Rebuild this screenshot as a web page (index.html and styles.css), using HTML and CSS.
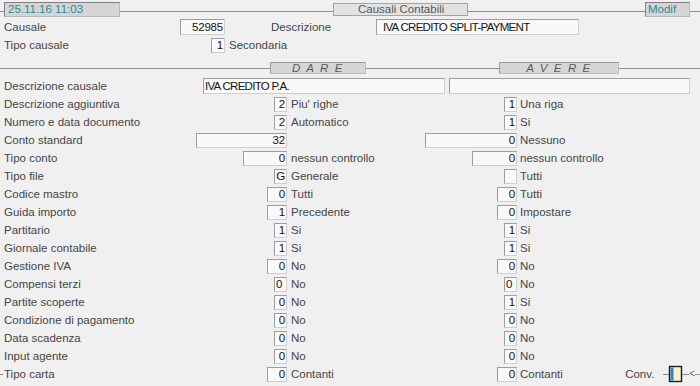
FILE: index.html
```html
<!DOCTYPE html>
<html lang="it">
<head>
<meta charset="utf-8">
<title>Causali Contabili</title>
<link rel="stylesheet" href="styles.css">
</head>
<body>
<div class="screen">
  <div class="topbar">
    <span class="rule w4"></span>
    <div class="stamp date">25.11.16 11:03</div>
    <span class="rule w213"></span>
    <div class="title">Causali Contabili</div>
    <span class="rule grow"></span>
    <div class="stamp modif">Modif</div>
    <span class="rule w10"></span>
  </div>

  <div class="head-row">
    <span class="lbl w176">Causale</span>
    <span class="fld h16 w45">52985</span>
    <span class="lbl desc-lbl">Descrizione</span>
    <span class="fld h16 w203 left pad6">IVA CREDITO SPLIT-PAYMENT</span>
  </div>
  <div class="head-row">
    <span class="lbl w207">Tipo causale</span>
    <span class="fld w14">1</span>
    <span class="lbl after">Secondaria</span>
  </div>

  <div class="sep">
    <span class="rule w270"></span>
    <span class="tab w96">D A R E</span>
    <span class="rule w133"></span>
    <span class="tab w120">A V E R E</span>
    <span class="rule grow"></span>
  </div>

  <div class="desc-row">
    <span class="lbl w199">Descrizione causale</span>
    <span class="fld h16 w242 left">IVA CREDITO P.A.</span>
    <span class="fld h16 w241 left gap4"></span>
  </div>

  <div class="grid-row">
    <span class="lbl">Descrizione aggiuntiva</span>
    <span class="cell"><span class="fld s">2</span></span>
    <span class="txt">Piu' righe</span>
    <span class="cell"><span class="fld s">1</span></span>
    <span class="txt2">Una riga</span>
  </div>
  <div class="grid-row">
    <span class="lbl">Numero e data documento</span>
    <span class="cell"><span class="fld s">2</span></span>
    <span class="txt">Automatico</span>
    <span class="cell"><span class="fld s">1</span></span>
    <span class="txt2">Si</span>
  </div>
  <div class="grid-row">
    <span class="lbl">Conto standard</span>
    <span class="cell"><span class="fld xl">32</span></span>
    <span class="txt"></span>
    <span class="cell"><span class="fld xl2">0</span></span>
    <span class="txt2">Nessuno</span>
  </div>
  <div class="grid-row">
    <span class="lbl">Tipo conto</span>
    <span class="cell"><span class="fld w">0</span></span>
    <span class="txt">nessun controllo</span>
    <span class="cell"><span class="fld w2">0</span></span>
    <span class="txt2">nessun controllo</span>
  </div>
  <div class="grid-row">
    <span class="lbl">Tipo file</span>
    <span class="cell"><span class="fld s">G</span></span>
    <span class="txt">Generale</span>
    <span class="cell"><span class="fld s"></span></span>
    <span class="txt2">Tutti</span>
  </div>
  <div class="grid-row">
    <span class="lbl">Codice mastro</span>
    <span class="cell"><span class="fld m">0</span></span>
    <span class="txt">Tutti</span>
    <span class="cell"><span class="fld m">0</span></span>
    <span class="txt2">Tutti</span>
  </div>
  <div class="grid-row">
    <span class="lbl">Guida importo</span>
    <span class="cell"><span class="fld m">1</span></span>
    <span class="txt">Precedente</span>
    <span class="cell"><span class="fld m">0</span></span>
    <span class="txt2">Impostare</span>
  </div>
  <div class="grid-row">
    <span class="lbl">Partitario</span>
    <span class="cell"><span class="fld s">1</span></span>
    <span class="txt">Si</span>
    <span class="cell"><span class="fld s">1</span></span>
    <span class="txt2">Si</span>
  </div>
  <div class="grid-row">
    <span class="lbl">Giornale contabile</span>
    <span class="cell"><span class="fld s">1</span></span>
    <span class="txt">Si</span>
    <span class="cell"><span class="fld s">1</span></span>
    <span class="txt2">Si</span>
  </div>
  <div class="grid-row">
    <span class="lbl">Gestione IVA</span>
    <span class="cell"><span class="fld m">0</span></span>
    <span class="txt">No</span>
    <span class="cell"><span class="fld m">0</span></span>
    <span class="txt2">No</span>
  </div>
  <div class="grid-row">
    <span class="lbl">Compensi terzi</span>
    <span class="cell"><span class="fld s left">0</span></span>
    <span class="txt">No</span>
    <span class="cell"><span class="fld s left">0</span></span>
    <span class="txt2">No</span>
  </div>
  <div class="grid-row">
    <span class="lbl">Partite scoperte</span>
    <span class="cell"><span class="fld s">0</span></span>
    <span class="txt">No</span>
    <span class="cell"><span class="fld s">1</span></span>
    <span class="txt2">Si</span>
  </div>
  <div class="grid-row">
    <span class="lbl">Condizione di pagamento</span>
    <span class="cell"><span class="fld s">0</span></span>
    <span class="txt">No</span>
    <span class="cell"><span class="fld s">0</span></span>
    <span class="txt2">No</span>
  </div>
  <div class="grid-row">
    <span class="lbl">Data scadenza</span>
    <span class="cell"><span class="fld s">0</span></span>
    <span class="txt">No</span>
    <span class="cell"><span class="fld s">0</span></span>
    <span class="txt2">No</span>
  </div>
  <div class="grid-row">
    <span class="lbl">Input agente</span>
    <span class="cell"><span class="fld s">0</span></span>
    <span class="txt">No</span>
    <span class="cell"><span class="fld s">0</span></span>
    <span class="txt2">No</span>
  </div>
  <div class="grid-row">
    <span class="lbl dash">Tipo carta</span>
    <span class="cell"><span class="fld m">0</span></span>
    <span class="txt">Contanti</span>
    <span class="cell"><span class="fld m">0</span></span>
    <span class="txt2 last">
      <span>Contanti</span>
      <span class="conv">
        <span class="conv-lbl">Conv.</span>
        <svg class="conv-icon" width="26" height="18" viewBox="0 0 26 18" aria-hidden="true">
          <line x1="0" y1="9.5" x2="6" y2="9.5" stroke="#8a8a8a" stroke-width="1"/>
          <rect x="6.5" y="1.5" width="12" height="15" fill="#f7f3c6" stroke="#1e1e1e" stroke-width="1.4"/>
          <rect x="7.5" y="2.5" width="3" height="13" fill="#2f7fd8"/>
          <line x1="19" y1="9.5" x2="26" y2="9.5" stroke="#8a8a8a" stroke-width="1"/>
        </svg>
        <span class="lt">&lt;</span>
        <span class="rule tail"></span>
      </span>
    </span>
  </div>
</div>
</body>
</html>
```

FILE: styles.css
```css
html, body {
  margin: 0;
  padding: 0;
  background: #f0f0f0;
}

.screen {
  width: 700px;
  height: 386px;
  overflow: hidden;
  font-family: "Liberation Sans", Arial, sans-serif;
  font-size: 11.5px;
  color: #464646;
}

/* generic rules */
.rule {
  display: block;
  height: 1px;
  background: #8e8e8e;
  flex: none;
}
.rule.grow { flex: 1 1 auto; }
.w4 { width: 4px; }
.w10 { width: 10px; }
.w213 { width: 213px; }
.w270 { width: 270px; }
.w133 { width: 133px; }

/* top bar */
.topbar {
  display: flex;
  align-items: flex-start;
  height: 18px;
}
.topbar .rule { margin-top: 11px; }

.stamp {
  box-sizing: border-box;
  height: 15px;
  margin-top: 2px;
  background: #d5d5d5;
  border: 1px solid;
  border-color: #808080 #b8b8b8 #b8b8b8 #808080;
  color: #2a8b98;
  font-size: 11.5px;
  line-height: 13px;
  white-space: nowrap;
  flex: none;
}
.date { width: 116px; padding-left: 3px; }
.modif { width: 45px; padding-left: 2px; }

.title {
  box-sizing: border-box;
  width: 135px;
  height: 13px;
  margin-top: 3px;
  padding-left: 24px;
  background: #e3e3e3;
  border: 1px solid #a4a4a4;
  color: #555555;
  line-height: 11px;
  flex: none;
}

/* head rows */
.head-row {
  display: flex;
  align-items: center;
  height: 18px;
  padding-left: 4px;
}
.lbl { white-space: nowrap; flex: none; }
.w176 { width: 176px; }
.w207 { width: 207px; }
.w199 { width: 199px; }
.desc-lbl { width: 105px; margin-left: 46px; }
.after { margin-left: 4px; }

/* fields */
.fld {
  box-sizing: border-box;
  display: block;
  height: 15px;
  padding: 0 1px;
  background: #f9f9f9;
  border: 1px solid;
  border-color: #9e9e9e #cfcfcf #cfcfcf #9e9e9e;
  color: #141414;
  line-height: 13px;
  text-align: right;
  letter-spacing: -0.2px;
  white-space: nowrap;
  overflow: hidden;
  flex: none;
}
.fld.h16 { height: 16px; line-height: 14px; }
.fld.left { text-align: left; }
.fld.pad6 { padding-left: 6px; }
.w45 { width: 45px; }
.w14 { width: 14px; }
.w203 { width: 203px; letter-spacing: -0.7px; }
.w242 { width: 242px; letter-spacing: -0.7px; }
.w241 { width: 241px; }
.gap4 { margin-left: 4px; }

.fld.s { width: 13px; }
.fld.m { width: 20px; }
.fld.w { width: 44px; }
.fld.w2 { width: 45px; }
.fld.xl { width: 91px; }
.fld.xl2 { width: 92px; }

/* DARE / AVERE separator */
.sep {
  display: flex;
  align-items: center;
  height: 18px;
  margin-top: 5px;
}
.tab {
  box-sizing: border-box;
  display: block;
  height: 12px;
  background: #d6d6d6;
  border: 1px solid;
  border-color: #9a9a9a #bdbdbd #bdbdbd #9a9a9a;
  color: #5a5a5a;
  font-style: italic;
  font-size: 11.5px;
  line-height: 10px;
  letter-spacing: 1.6px;
  text-align: center;
  white-space: nowrap;
  flex: none;
}
.w96 { width: 96px; }
.w120 { width: 120px; }

/* description row */
.desc-row {
  display: flex;
  align-items: center;
  height: 18px;
  padding-left: 4px;
}

/* grid rows */
.grid-row {
  display: grid;
  grid-template-columns: 188px 95px 133px 97px 1fr;
  align-items: center;
  height: 18px;
  padding-left: 4px;
}
.cell {
  display: flex;
  justify-content: flex-end;
}
.txt { padding-left: 4px; white-space: nowrap; }
.txt2 { padding-left: 3px; white-space: nowrap; }

.txt2.last {
  display: flex;
  align-items: center;
}
.conv {
  display: flex;
  align-items: center;
  margin-left: auto;
}
.conv-lbl { width: 38px; }
.conv-icon { display: block; }
.lt {
  font-size: 10px;
  color: #6a6a6a;
  line-height: 10px;
}
.rule.tail { width: 5px; background: #9a9a9a; margin-top: 1px; }

.lbl.dash::before {
  content: "";
  display: inline-block;
  width: 3px;
  height: 1px;
  background: #8e8e8e;
  margin-left: -4px;
  margin-right: 1px;
  vertical-align: middle;
}
```
